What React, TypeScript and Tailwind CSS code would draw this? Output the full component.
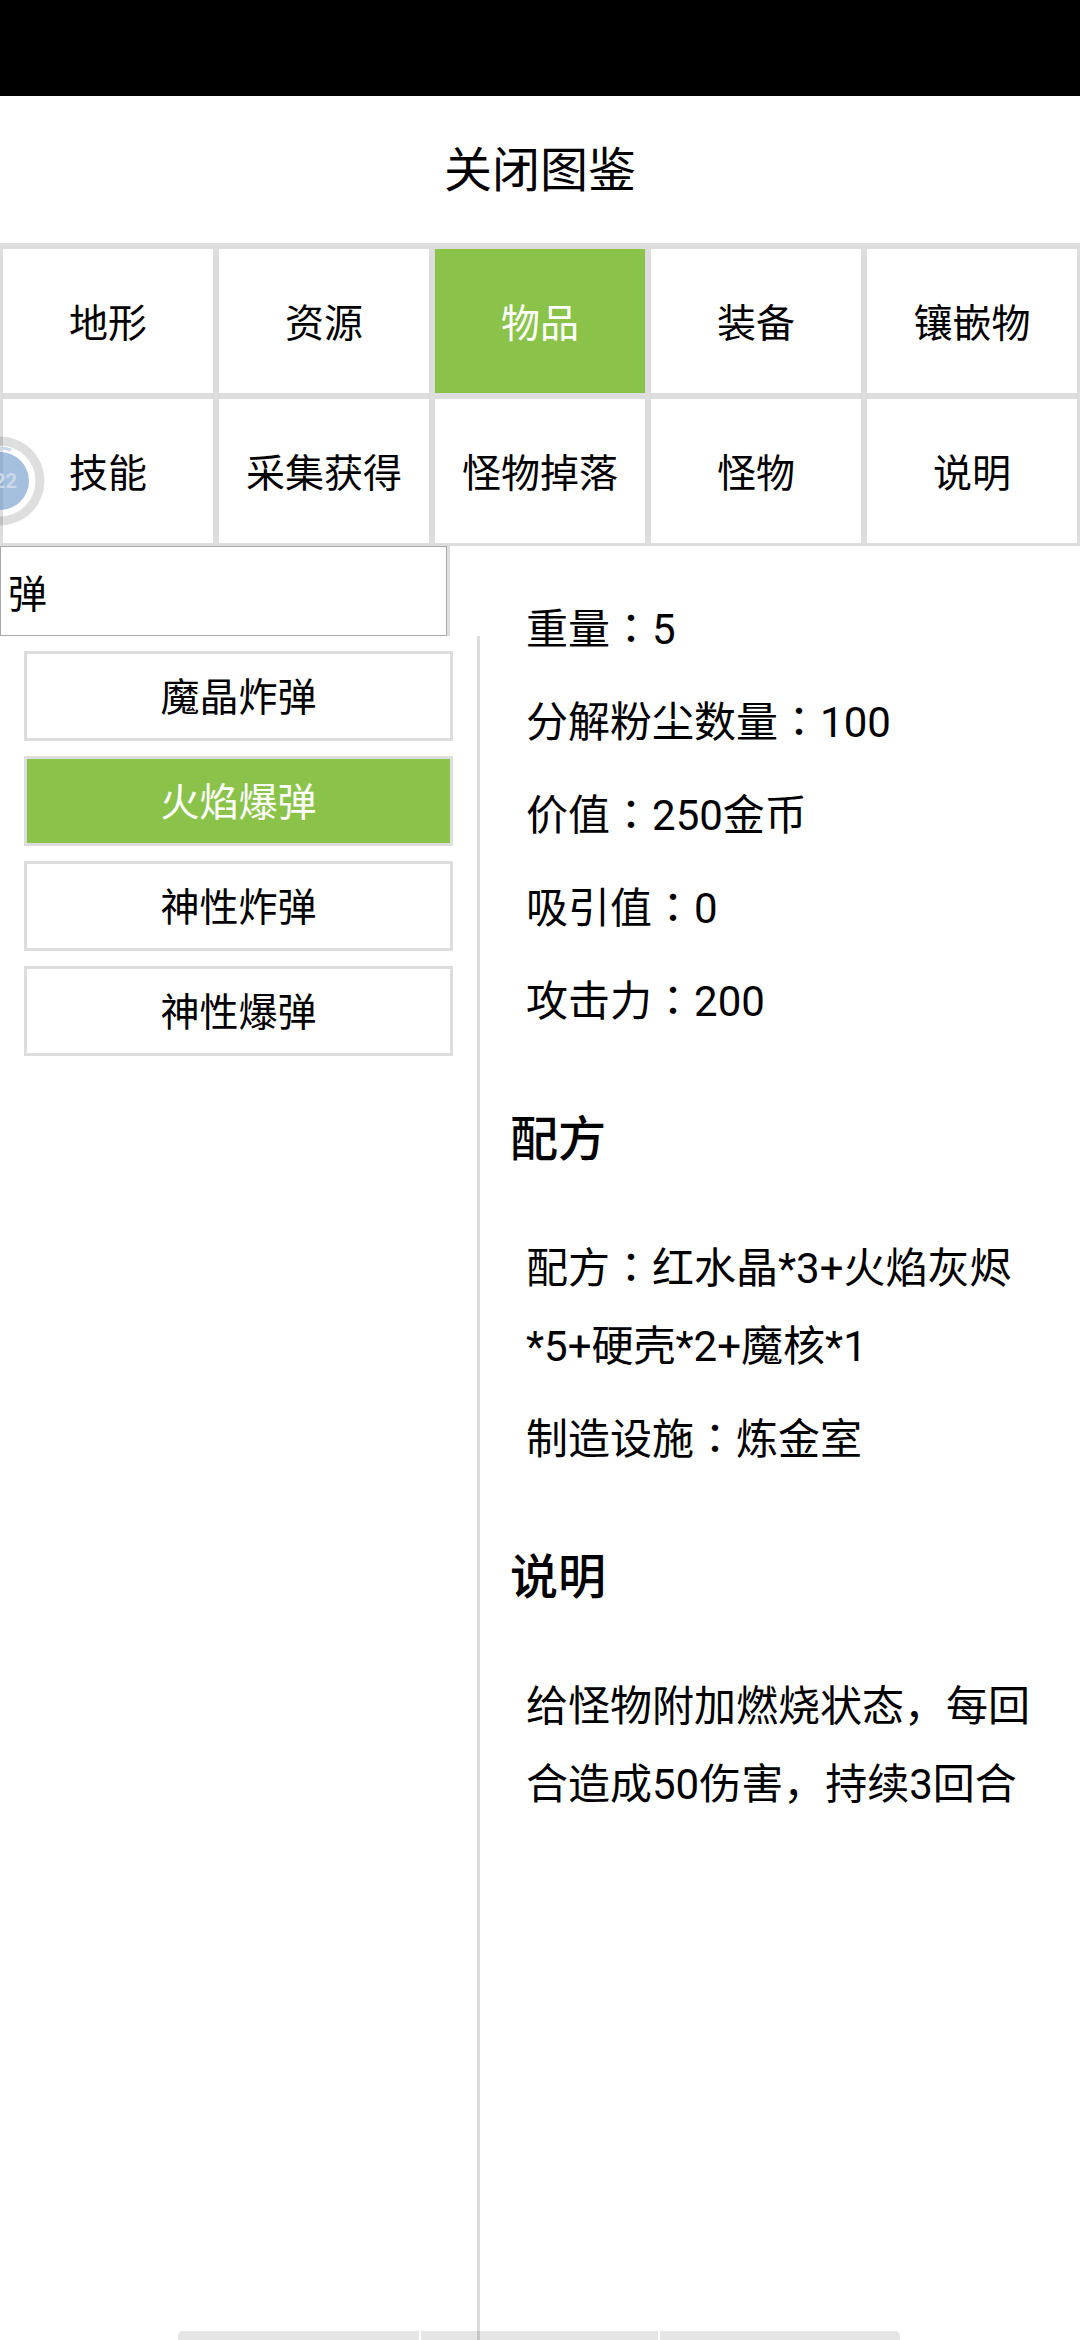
import React from 'react';

const tabs = ['地形', '资源', '物品', '装备', '镶嵌物', '技能', '采集获得', '怪物掉落', '怪物', '说明'];
const items = ['魔晶炸弹', '火焰爆弹', '神性炸弹', '神性爆弹'];

// the reference sets the full-width colon in the middle of its cell, as the JP cut does
const Colon = () => <span className="font-[Roboto,'Noto_Sans_CJK_JP',sans-serif]">：</span>;

const Line: React.FC<{ label: string; children: React.ReactNode }> = ({ label, children }) => (
  <p className="mb-[15px] pl-[46px] pr-[30px] text-[42px] leading-[78px]">
    {label}
    <Colon />
    {children}
  </p>
);

const Heading: React.FC<{ children: React.ReactNode }> = ({ children }) => (
  <h3 className="mt-[60px] mb-[51px] pl-[30px] text-[48px] font-medium leading-[78px]">{children}</h3>
);

const FloatBall = () => (
  <svg className="absolute left-0 top-[436px]" width="46" height="90" viewBox="0 0 46 90">
    <path d="M0 0.5a44.5 44.5 0 0 1 0 89v-9a35.5 35.5 0 0 0 0-71z" fill="rgba(0,0,0,0.13)" />
    <path d="M0 12a33 33 0 0 1 11 2" fill="none" stroke="#c9d9ea" strokeWidth="3" />
    <circle cx="0" cy="45" r="29" fill="rgba(90,140,195,0.55)" />
    <text x="17" y="52" textAnchor="end" fontSize="20" fontWeight="700" fontFamily="Roboto" fill="#ccd9e8">
      22
    </text>
  </svg>
);

const App: React.FC = () => {
  return (
    <div className="relative flex h-[2340px] w-[1080px] flex-col overflow-hidden bg-white font-[Roboto,'Noto_Sans_CJK_SC',sans-serif] text-black">
      <div className="h-[96px] bg-black" />
      <div className="flex h-[147px] items-center justify-center pt-[2px] text-[48px]">关闭图鉴</div>

      <div className="grid grid-cols-5 border-t-[3px] border-[#ddd]">
        {tabs.map((tab) => (
          <div
            key={tab}
            className={`flex h-[150px] items-center justify-center border-[3px] border-[#ddd] pt-[6px] text-[39px] ${
              tab === '物品' ? 'bg-[#8bc34a] text-white' : ''
            }`}
          >
            {tab}
          </div>
        ))}
      </div>

      <div className="flex flex-1">
        <div className="flex w-[480px] flex-col">
          <div className="h-[90px] w-[450px] border-r-[3px] border-[#ddd]">
            <input
              readOnly
              value="弹"
              className="h-[90px] w-full border-[1.5px] border-[#aaa] px-[7px] text-[39px] outline-none"
            />
          </div>
          <div className="flex flex-1 flex-col gap-[15px] border-r-[3px] border-[#ddd] pl-[24px] pr-[24px] pt-[15px]">
            {items.map((item) => (
              <div
                key={item}
                className={`flex h-[90px] items-center justify-center border-[3px] border-[#ddd] pt-[5px] text-[39px] ${
                  item === '火焰爆弹' ? 'bg-[#8bc34a] text-white' : ''
                }`}
              >
                {item}
              </div>
            ))}
          </div>
        </div>

        <div className="flex-1 pt-[45px]">
          <Line label="重量">5</Line>
          <Line label="分解粉尘数量">100</Line>
          <Line label="价值">250金币</Line>
          <Line label="吸引值">0</Line>
          <Line label="攻击力">200</Line>
          <Heading>配方</Heading>
          <Line label="配方">红水晶*3+火焰灰烬*5+硬壳*2+魔核*1</Line>
          <Line label="制造设施">炼金室</Line>
          <Heading>说明</Heading>
          <p className="mb-[15px] pl-[46px] pr-[30px] text-[42px] leading-[78px]">
            给怪物附加燃烧状态，每回合造成50伤害，持续3回合
          </p>
        </div>
      </div>

      <FloatBall />

      <div className="absolute bottom-0 left-[178px] flex h-[9px] w-[722px] gap-[2px]">
        <div className="w-[241px] rounded-tl-[5px] bg-black/10" />
        <div className="w-[237px] bg-black/10" />
        <div className="w-[240px] rounded-tr-[5px] bg-black/10" />
      </div>
    </div>
  );
};

export default App;
